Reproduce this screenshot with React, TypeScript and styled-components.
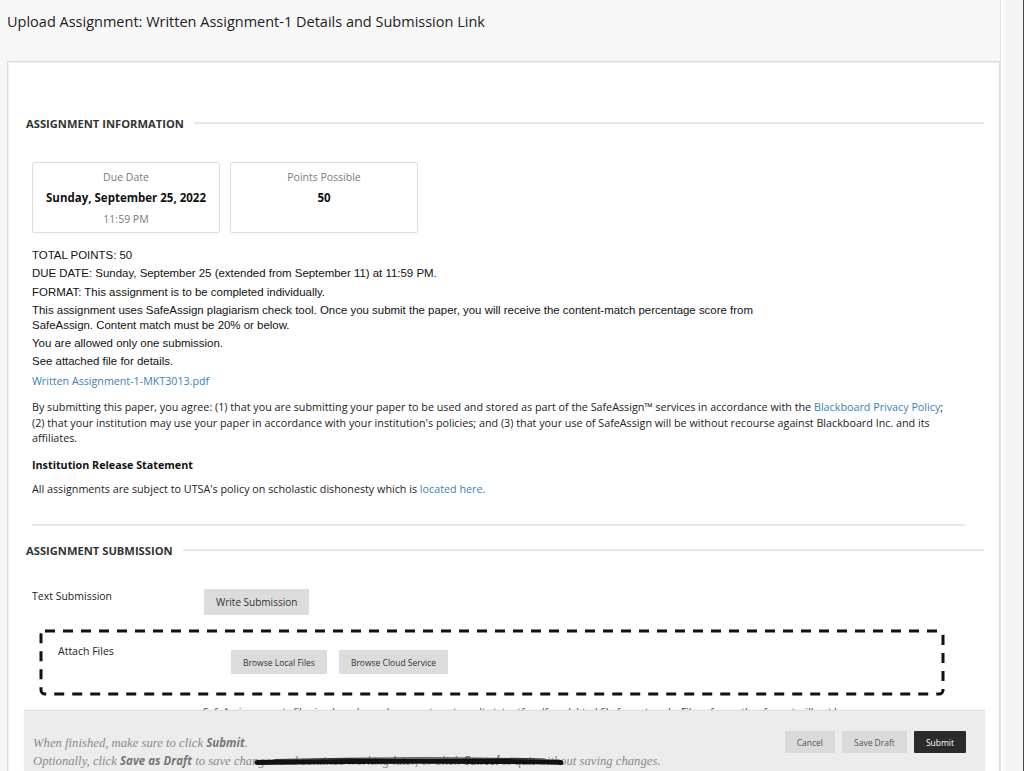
import React from "react";
import styled, { createGlobalStyle } from "styled-components";

const GlobalStyle = createGlobalStyle`
  html, body {
    margin: 0;
    padding: 0;
    background: #f7f7f7;
    font-family: "Open Sans", "Liberation Sans", sans-serif;
    color: #262626;
  }
  * { box-sizing: border-box; }
`;

const Page = styled.div`
  position: relative;
  display: flex;
  height: 100vh;
  overflow: hidden;
`;

const Main = styled.div`
  width: 1000px;
  flex: none;
  padding-left: 7px;
`;

const Rail = styled.div`
  flex: 1;
  background: #f4f4f4;
  border-left: 1px solid #e4e4e4;
  border-right: 1px solid #4a4a4a;
  box-shadow: inset 4px 0 0 #fbfbfb;
`;

const Title = styled.h1`
  margin: 0;
  padding: 12px 0 0;
  height: 61px;
  font-size: 14.5px;
  line-height: 20px;
  font-weight: 400;
  color: #222;
`;

const Card = styled.div`
  background: #fff;
  border: 1px solid #dcdcdc;
  box-shadow: inset 1px 1px 0 #efefef;
  padding: 53px 15px 0 18px;
  min-height: 720px;
`;

const SectionHead = styled.div`
  display: flex;
  align-items: center;
  gap: 10px;
  height: 16px;
  font-size: 11.2px;
  font-weight: 700;
  color: #333;
  &::after {
    content: "";
    flex: 1;
    height: 2px;
    background: #e8e8e8;
  }
`;

const Body = styled.div`
  padding-left: 6px;
`;

const Boxes = styled.div`
  display: flex;
  gap: 10px;
  margin-top: 31px;
`;

const InfoBox = styled.div`
  width: 188px;
  height: 71px;
  border: 1px solid #dedede;
  border-radius: 2px;
  padding-top: 4px;
  text-align: center;
`;

const InfoLabel = styled.div`
  font-size: 10.5px;
  line-height: 20px;
  color: #7a7a7a;
`;

const InfoValue = styled.div`
  font-size: 11.5px;
  line-height: 22px;
  font-weight: 700;
  color: #111;
`;

const Plain = styled.div`
  margin-top: 15px;
  font-family: "Liberation Sans", Arial, sans-serif;
  font-size: 11.45px;
  color: #111;
`;

const Line = styled.p`
  margin: 0 0 3.3px;
  line-height: 15px;
`;

const Link = styled.a`
  color: #3b7fb9;
  text-decoration: none;
`;

const FileLink = styled(Link)`
  display: block;
  margin-top: 5px;
  font-family: "Open Sans", sans-serif;
  font-size: 10.7px;
  line-height: 15px;
`;

const Para = styled.p<{ $top: number }>`
  margin: ${(p) => p.$top}px 0 0;
  font-size: 10.75px;
  line-height: 15.5px;
  color: #222;
`;

const Strong = styled.p`
  margin: 11px 0 0;
  font-size: 10.75px;
  font-weight: 700;
  line-height: 15px;
  color: #111;
`;

const Divider = styled.hr`
  margin: 27px 19px 0 0;
  border: 0;
  height: 2px;
  background: #e8e8e8;
`;

const SubmissionHead = styled(SectionHead)`
  margin-left: -6px;
  margin-top: 16px;
`;

const FieldRow = styled.div`
  display: flex;
  align-items: flex-start;
`;

const FieldLabel = styled.div`
  width: 172px;
  flex: none;
  font-size: 10.5px;
  line-height: 16px;
  color: #222;
`;

const GrayButton = styled.button<{ $small?: boolean }>`
  height: ${(p) => (p.$small ? 24 : 26)}px;
  padding: 0 12px;
  border: 0;
  border-radius: 1px;
  background: #dcdcdc;
  font-family: "Open Sans", sans-serif;
  font-size: ${(p) => (p.$small ? 8.5 : 10)}px;
  color: #333;
  cursor: pointer;
`;

const TextRow = styled(FieldRow)`
  margin-top: 31px;
  & > ${FieldLabel} { margin-top: -1px; }
`;

const DropZone = styled.div`
  position: relative;
  margin: 16px 0 0 9px;
  width: 902px;
  height: 63px;
  padding: 12px 0 0 17px;
  display: flex;
  align-items: flex-start;
`;

/* dashed outline drawn around the drop area */
const DashFrame = styled.svg`
  position: absolute;
  inset: 0;
  width: 100%;
  height: 100%;
  overflow: visible;
  pointer-events: none;
`;

const DropLabel = styled(FieldLabel)`
  width: 173px;
`;

const ButtonGroup = styled.div`
  display: flex;
  gap: 12px;
  margin-top: 7px;
`;

const Hint = styled.p`
  margin: 11px 0 0 171px;
  font-size: 10px;
  line-height: 14px;
  color: #444;
  white-space: nowrap;
`;

const Footer = styled.div`
  position: absolute;
  left: 24px;
  bottom: 0;
  width: 961px;
  height: 61px;
  background: #ececec;
  border-top: 1px solid #dedede;
  box-shadow: 0 -1px 3px rgba(0, 0, 0, 0.06);
  display: flex;
  align-items: center;
  justify-content: space-between;
  padding: 21px 19px 0 9px;
`;

const FooterNote = styled.div`
  position: relative;
  font-family: "Liberation Serif", "DejaVu Serif", serif;
  font-style: italic;
  font-size: 12.7px;
  line-height: 17px;
  color: #8a8a8a;
  b {
    font-family: "Open Sans", sans-serif;
    font-weight: 700;
    font-size: 11.5px;
    color: #777;
  }
`;

const Scribble = styled.svg`
  position: absolute;
  left: 222px;
  top: 24px;
  overflow: visible;
`;

const Actions = styled.div`
  display: flex;
  gap: 7px;
  margin-top: -19px;
`;

const ActionButton = styled.button<{ $primary?: boolean }>`
  height: 22px;
  padding: 0 12px;
  border: 0;
  border-radius: 1px;
  background: ${(p) => (p.$primary ? "#2b2b2b" : "#dadada")};
  color: ${(p) => (p.$primary ? "#fff" : "#555")};
  font-family: "Open Sans", sans-serif;
  font-size: 8.5px;
`;

export default function App() {
  return (
    <Page>
      <GlobalStyle />
      <Main>
        <Title>Upload Assignment: Written Assignment-1 Details and Submission Link</Title>
        <Card>
          <SectionHead>ASSIGNMENT INFORMATION</SectionHead>
          <Body>
            <Boxes>
              <InfoBox>
                <InfoLabel>Due Date</InfoLabel>
                <InfoValue>Sunday, September 25, 2022</InfoValue>
                <InfoLabel>11:59 PM</InfoLabel>
              </InfoBox>
              <InfoBox>
                <InfoLabel>Points Possible</InfoLabel>
                <InfoValue>50</InfoValue>
              </InfoBox>
            </Boxes>
            <Plain>
              <Line>TOTAL POINTS: 50</Line>
              <Line>DUE DATE: Sunday, September 25 (extended from September 11) at 11:59 PM.</Line>
              <Line>FORMAT: This assignment is to be completed individually.</Line>
              <Line>
                This assignment uses SafeAssign plagiarism check tool. Once you submit the paper, you will receive the content-match percentage score from
                <br />
                SafeAssign. Content match must be 20% or below.
              </Line>
              <Line>You are allowed only one submission.</Line>
              <Line>See attached file for details.</Line>
            </Plain>
            <FileLink href="#">Written Assignment-1-MKT3013.pdf</FileLink>
            <Para $top={11}>
              By submitting this paper, you agree: (1) that you are submitting your paper to be used and stored as part of the SafeAssign™ services in accordance with the{" "}
              <Link href="#">Blackboard Privacy Policy</Link>;
              <br />
              (2) that your institution may use your paper in accordance with your institution's policies; and (3) that your use of SafeAssign will be without recourse against Blackboard Inc. and its
              <br />
              affiliates.
            </Para>
            <Strong>Institution Release Statement</Strong>
            <Para $top={9}>
              All assignments are subject to UTSA's policy on scholastic dishonesty which is <Link href="#">located here.</Link>
            </Para>
            <Divider />
            <SubmissionHead>ASSIGNMENT SUBMISSION</SubmissionHead>
            <TextRow>
              <FieldLabel>Text Submission</FieldLabel>
              <GrayButton>Write Submission</GrayButton>
            </TextRow>
            <DropZone>
              <DashFrame>
                <rect x="0" y="0" width="100%" height="100%" rx="4" fill="none" stroke="#111" strokeWidth="3" strokeDasharray="10 8" />
              </DashFrame>
              <DropLabel>Attach Files</DropLabel>
              <ButtonGroup>
                <GrayButton $small>Browse Local Files</GrayButton>
                <GrayButton $small>Browse Cloud Service</GrayButton>
              </ButtonGroup>
            </DropZone>
            <Hint>
              SafeAssign accepts files in .doc, .docx, .docm, .ppt, .pptx, .odt, .txt, .rtf, .pdf, and .html file formats only. Files of any other format will not be
            </Hint>
          </Body>
        </Card>
      </Main>
      <Rail />
      <Footer>
        <FooterNote>
          When finished, make sure to click <b>Submit</b>.
          <br />
          Optionally, click <b>Save as Draft</b> to save changes and continue working later, or click <b>Cancel</b> to quit without saving changes.
          <Scribble width="310" height="8" viewBox="0 0 310 8">
            <path d="M2 4.5 C60 3.5 140 3 230 3.4 S300 4.2 306 4.6" stroke="#111" strokeWidth="5" fill="none" strokeLinecap="round" />
            <path d="M20 1.5 C90 0 200 -0.5 290 1" stroke="#333" strokeWidth="1.2" fill="none" strokeLinecap="round" />
          </Scribble>
        </FooterNote>
        <Actions>
          <ActionButton>Cancel</ActionButton>
          <ActionButton>Save Draft</ActionButton>
          <ActionButton $primary>Submit</ActionButton>
        </Actions>
      </Footer>
    </Page>
  );
}
